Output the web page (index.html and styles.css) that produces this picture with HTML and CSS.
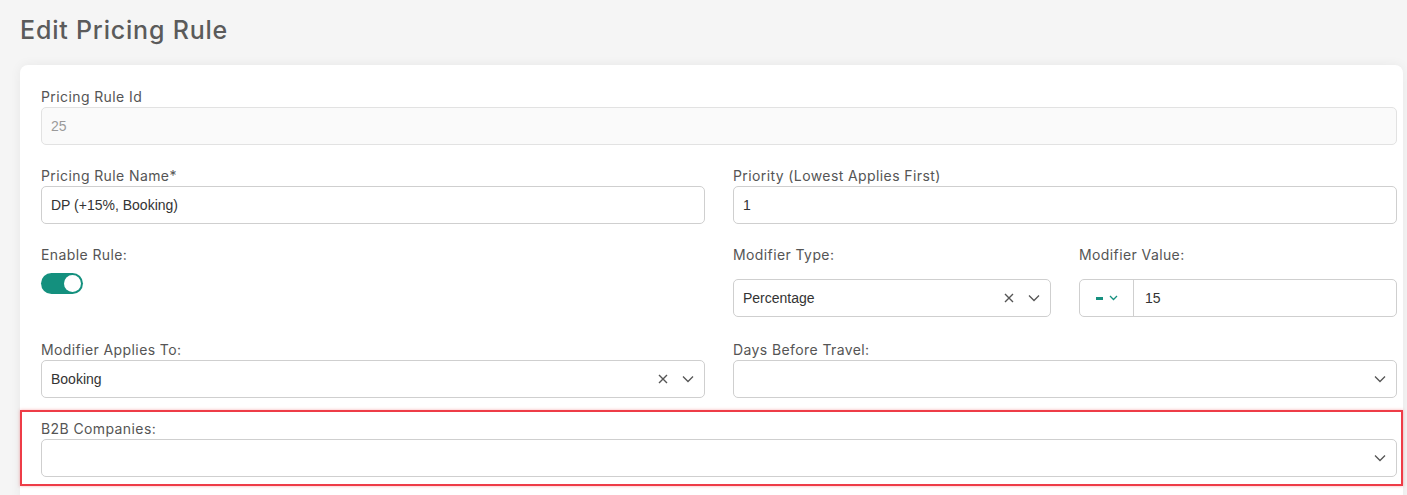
FILE: index.html
```html
<!DOCTYPE html>
<html lang="en">
<head>
    <meta charset="UTF-8">
    <meta name="viewport" content="width=device-width, initial-scale=1.0">
    <title>Edit Pricing Rule</title>
    <link rel="stylesheet" href="styles.css">
</head>
<body>
    <div class="page">
        <h1 class="page-title">Edit Pricing Rule</h1>

        <div class="card">
            <div class="form-group">
                <label>Pricing Rule Id</label>
                <div class="input disabled">25</div>
            </div>

            <div class="form-row">
                <div class="form-group">
                    <label>Pricing Rule Name*</label>
                    <div class="input">DP (+15%, Booking)</div>
                </div>
                <div class="form-group">
                    <label>Priority (Lowest Applies First)</label>
                    <div class="input">1</div>
                </div>
            </div>

            <div class="form-row">
                <div class="form-group">
                    <label class="label-tall">Enable Rule:</label>
                    <div class="toggle"><span class="knob"></span></div>
                </div>
                <div class="form-row">
                    <div class="form-group">
                        <label class="label-wide">Modifier Type:</label>
                        <div class="input select">
                            <span class="value">Percentage</span>
                            <svg class="clear" width="10" height="10" viewBox="0 0 10 10"><path d="M1 1l8 8M9 1l-8 8" stroke="#555" stroke-width="1.4" fill="none"/></svg>
                            <svg class="chev" width="12" height="8" viewBox="0 0 12 8"><path d="M1 1.5l5 5 5-5" stroke="#555" stroke-width="1.3" fill="none"/></svg>
                        </div>
                    </div>
                    <div class="form-group">
                        <label class="label-wide">Modifier Value:</label>
                        <div class="input-group">
                            <div class="addon">
                                <span class="dash"></span>
                                <svg width="9" height="6" viewBox="0 0 9 6"><path d="M1 1l3.5 3.5 3.5-3.5" stroke="#16907f" stroke-width="1.3" fill="none"/></svg>
                            </div>
                            <div class="addon-value">15</div>
                        </div>
                    </div>
                </div>
            </div>

            <div class="form-row">
                <div class="form-group">
                    <label>Modifier Applies To:</label>
                    <div class="input select">
                        <span class="value">Booking</span>
                        <svg class="clear" width="10" height="10" viewBox="0 0 10 10"><path d="M1 1l8 8M9 1l-8 8" stroke="#555" stroke-width="1.4" fill="none"/></svg>
                        <svg class="chev" width="12" height="8" viewBox="0 0 12 8"><path d="M1 1.5l5 5 5-5" stroke="#555" stroke-width="1.3" fill="none"/></svg>
                    </div>
                </div>
                <div class="form-group">
                    <label>Days Before Travel:</label>
                    <div class="input select">
                        <span class="value"></span>
                        <svg class="chev" width="12" height="8" viewBox="0 0 12 8"><path d="M1 1.5l5 5 5-5" stroke="#555" stroke-width="1.3" fill="none"/></svg>
                    </div>
                </div>
            </div>

            <div class="form-group highlight">
                <label>B2B Companies:</label>
                <div class="input select">
                    <span class="value"></span>
                    <svg class="chev" width="12" height="8" viewBox="0 0 12 8"><path d="M1 1.5l5 5 5-5" stroke="#555" stroke-width="1.3" fill="none"/></svg>
                </div>
            </div>
        </div>
    </div>
</body>
</html>
```

FILE: styles.css
```css
* {
    margin: 0;
    padding: 0;
    box-sizing: border-box;
}

body {
    background: #f5f5f5;
    font-family: Inter, 'Noto Sans', sans-serif;
    overflow: hidden;
}

.page {
    padding: 0 4px 0 20px;
}

.page-title {
    font-size: 25px;
    font-weight: 500;
    color: #5b5b5b;
    line-height: 30px;
    padding-top: 15px;
    height: 65px;
    letter-spacing: 0.8px;
}

.card {
    background: #fff;
    border-radius: 8px;
    box-shadow: 0 0 12px rgba(0,0,0,0.06);
    padding: 23px 6px 10px 21px;
    min-height: 440px;
}

.form-row {
    display: grid;
    grid-template-columns: 1fr 1fr;
    column-gap: 28px;
}

.form-group {
    margin-bottom: 22px;
}

.form-row .form-row .form-group {
    margin-bottom: 24px;
}

label {
    display: block;
    font-size: 14px;
    line-height: 17px;
    color: #555;
    margin-bottom: 2px;
    letter-spacing: 0.4px;
}

.label-tall {
    margin-bottom: 10px;
}

.label-wide {
    margin-bottom: 16px;
}

.input {
    height: 38px;
    border: 1px solid #cfcfcf;
    border-radius: 5px;
    padding: 0 9px;
    display: flex;
    align-items: center;
    font-family: 'Liberation Sans', Arial, sans-serif;
    font-size: 14px;
    color: #333;
    background: #fff;
}

.input.disabled {
    background: #fafafa;
    border-color: #e2e2e2;
    color: #9a9a9a;
}

.select .value {
    flex: 1;
}

.select .clear {
    margin-right: 14px;
}

.select .chev {
    margin-right: 1px;
}

.toggle {
    width: 42px;
    height: 21px;
    border-radius: 11px;
    background: #14907e;
    display: flex;
    align-items: center;
    justify-content: flex-end;
    padding-right: 2px;
}

.knob {
    width: 17px;
    height: 17px;
    border-radius: 50%;
    background: #fff;
}

.input-group {
    display: flex;
    height: 38px;
    border: 1px solid #cfcfcf;
    border-radius: 5px;
    font-family: 'Liberation Sans', Arial, sans-serif;
    font-size: 14px;
    color: #333;
}

.addon {
    width: 54px;
    border-right: 1px solid #cfcfcf;
    display: flex;
    align-items: center;
    justify-content: center;
    gap: 6px;
}

.dash {
    width: 7px;
    height: 3px;
    background: #16907f;
}

.addon-value {
    display: flex;
    align-items: center;
    padding-left: 11px;
}

.highlight {
    margin: -10px -6px 0 -21px;
    padding: 8px 4px 7px 19px;
    border: 2px solid #ee3c47;
    box-shadow: 0 0 3px rgba(238,60,71,0.4);
}
```
